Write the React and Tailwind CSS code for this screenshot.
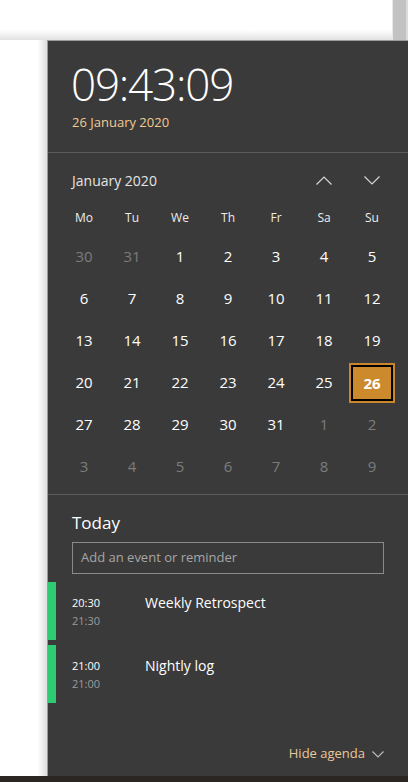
import React from "react";

const rows = [
  [[30, 0], [31, 0], [1, 1], [2, 1], [3, 1], [4, 1], [5, 1]],
  [[6, 1], [7, 1], [8, 1], [9, 1], [10, 1], [11, 1], [12, 1]],
  [[13, 1], [14, 1], [15, 1], [16, 1], [17, 1], [18, 1], [19, 1]],
  [[20, 1], [21, 1], [22, 1], [23, 1], [24, 1], [25, 1], [26, 2]],
  [[27, 1], [28, 1], [29, 1], [30, 1], [31, 1], [1, 0], [2, 0]],
  [[3, 0], [4, 0], [5, 0], [6, 0], [7, 0], [8, 0], [9, 0]],
];

const days = ["Mo", "Tu", "We", "Th", "Fr", "Sa", "Su"];

function Chevron({ up, className }) {
  return (
    <svg width="16" height="9" viewBox="0 0 16 9" className={className}>
      <path
        d={up ? "M0.5 8.5 L8 1 L15.5 8.5" : "M0.5 0.5 L8 8 L15.5 0.5"}
        fill="none"
        stroke="#d6d6d6"
        strokeWidth="1.2"
      />
    </svg>
  );
}

function Event({ start, end, title }) {
  return (
    <div className="flex h-[58px]">
      <div className="w-[8px] h-full bg-[#2dcc72]" />
      <div className="w-[89px] pl-[16px] pt-[12px] text-[11px] leading-[18px]">
        <div className="text-white">{start}</div>
        <div className="text-[#9c9c9c]">{end}</div>
      </div>
      <div className="pt-[10px] text-[14px] leading-[22px] text-white">{title}</div>
    </div>
  );
}

export default function App() {
  return (
    <div className="w-[408px] h-[782px] bg-white flex flex-col overflow-hidden font-['Open_Sans','Noto_Sans',sans-serif]">
      <div className="h-[40px] shrink-0 flex justify-end bg-[linear-gradient(to_bottom,#ffffff_75%,#e2e2e2)]">
        <div className="w-[16px] h-full flex">
          <div className="w-[1px] bg-[#e8e8e8]" />
          <div className="w-[13px] bg-[#c2c2c2]" />
          <div className="w-[2px] bg-[#dcdcdc]" />
        </div>
      </div>
      <div className="flex flex-1 min-h-0">
        <div className="w-[47px] shrink-0 bg-[linear-gradient(to_right,#ffffff_80%,#dedede)]" />
        <div className="flex-1 flex flex-col border-l border-t border-[#9c9c9c] bg-[#3a3a3a]">
          {/* clock */}
          <div className="h-[112px] shrink-0 border-b border-[#5c5c5c] pl-[23px] pt-[20px]">
            <div className="font-light text-[44px] leading-[46px] text-white tracking-[-1.2px]">
              09:43:09
            </div>
            <div className="mt-[5px] pl-[1px] text-[13px] leading-[20px] text-[#f2cb93]">
              26 January 2020
            </div>
          </div>
          {/* calendar */}
          <div className="h-[342px] shrink-0 border-b border-[#5c5c5c] px-[12px] pt-[13px]">
            <div className="flex h-[28px] items-center">
              <div className="flex-1 pl-[12px] text-[14px] text-[#e4e4e4]">January 2020</div>
              <div className="w-[48px] flex justify-center">
                <Chevron up />
              </div>
              <div className="w-[48px] flex justify-center">
                <Chevron />
              </div>
            </div>
            <div className="mt-[7px] grid grid-cols-7 h-[34px] items-center text-[12px] text-[#ececec]">
              {days.map((d) => (
                <div key={d} className="text-center">{d}</div>
              ))}
            </div>
            <div className="grid grid-cols-7">
              {rows.flat().map(([n, t], i) => (
                <div key={i} className="h-[42px] flex items-center justify-center">
                  {t === 2 ? (
                    <div className="w-[46px] h-[40px] border-2 border-[#c9862c] bg-black p-[2px] mt-[2px]">
                      <div className="w-full h-full bg-[#cc8a2c] flex items-center justify-center text-[15px] font-bold text-white">
                        {n}
                      </div>
                    </div>
                  ) : (
                    <span className={"text-[15px] " + (t === 1 ? "text-white" : "text-[#7c7c7c]")}>{n}</span>
                  )}
                </div>
              ))}
            </div>
          </div>
          {/* agenda */}
          <div className="flex-1 flex flex-col">
            <div className="pl-[24px] pt-[14px] h-[42px] text-[17px] leading-[28px] text-white">Today</div>
            <div className="mx-[24px] mt-[5px] h-[32px] border border-[#8a8a8a] flex items-center pl-[8px] text-[13px] text-[#a6a6a6]">
              Add an event or reminder
            </div>
            <div className="mt-[8px] flex flex-col gap-[5px]">
              <Event start="20:30" end="21:30" title="Weekly Retrospect" />
              <Event start="21:00" end="21:00" title="Nightly log" />
            </div>
            <div className="flex-1" />
            <div className="flex justify-end items-center pr-[24px] pb-[13px] h-[33px] text-[13px] leading-[20px] text-[#e9c89a]">
              <span>Hide agenda</span>
              <svg width="12" height="7" viewBox="0 0 12 7" className="ml-[7px] mt-[2px]">
                <path d="M0.5 0.5 L6 6 L11.5 0.5" fill="none" stroke="#bdbdbd" strokeWidth="1.1" />
              </svg>
            </div>
          </div>
        </div>
      </div>
      <div className="h-[6px] shrink-0 bg-[#2b2622]" />
    </div>
  );
}
